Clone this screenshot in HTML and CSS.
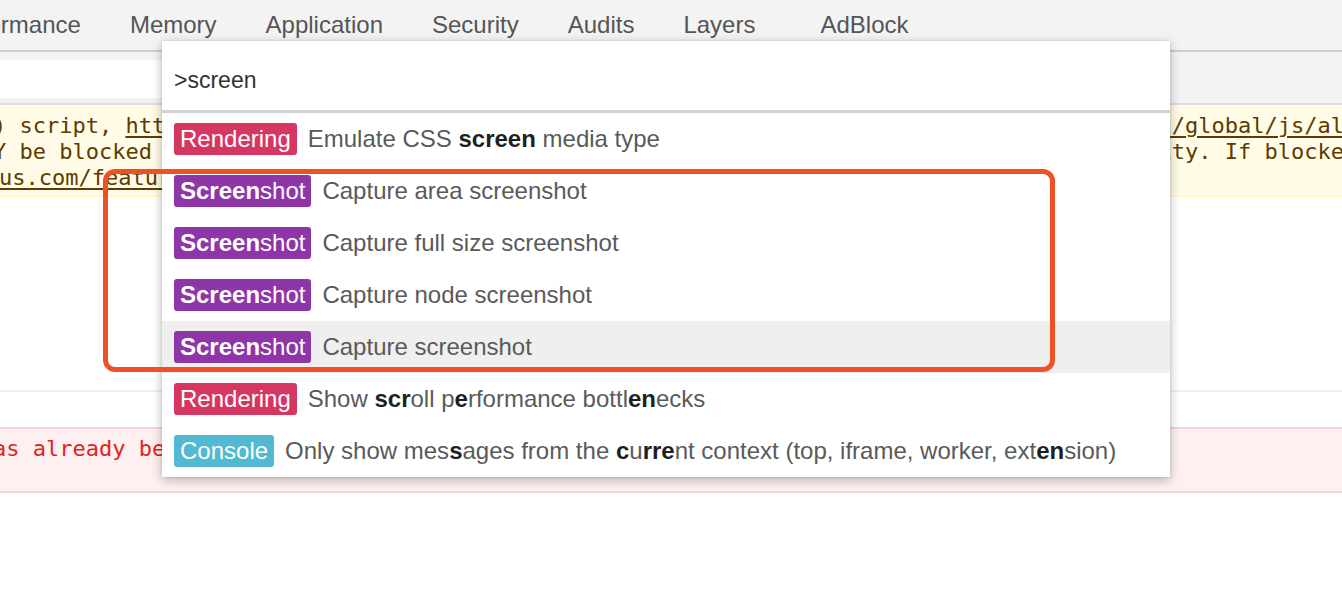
FILE: index.html
```html
<!DOCTYPE html>
<html lang="en">
<head>
<meta charset="utf-8">
<title>DevTools command menu</title>
<link rel="stylesheet" href="styles.css">
</head>
<body>
<div class="devtools">
  <nav class="tabbar">
    <span class="tab tab-first">Performance</span>
    <span class="tab">Memory</span>
    <span class="tab">Application</span>
    <span class="tab">Security</span>
    <span class="tab">Audits</span>
    <span class="tab">Layers</span>
    <span class="tab tab-ext">AdBlock</span>
  </nav>
  <div class="toolbar">
    <div class="filter"></div>
  </div>
  <div class="console">
    <div class="msg msg-warn">
      <div class="ln ln-1">) script, <u>https://static.example-ads-network.com/assets/bundles/third-party/lib/site/main/global/js/all.min.js</u>, is invoked via document.write.</div>
      <div class="ln ln-2">Y be blocked by a browser in this or in a future page load due to poor network connectivity. If blocked in this page load, it will be confirmed in a subsequent console message.</div>
      <div class="ln ln-3"><u>us.com/feature/5718547946799104</u> for more details.</div>
    </div>
    <div class="msg-blank"></div>
    <div class="msg msg-plain"></div>
    <div class="msg msg-error">
      <div class="ln ln-err">as already been declared</div>
      <div class="ln">&nbsp;</div>
    </div>
  </div>
</div>

<div class="palette">
  <div class="prompt">&gt;screen</div>
  <ul class="items">
    <li class="item"><span class="badge b-render">Rendering</span><span class="desc">Emulate CSS <b>screen</b> media type</span></li>
    <li class="item"><span class="badge b-shot"><b>Screen</b>shot</span><span class="desc">Capture area screenshot</span></li>
    <li class="item"><span class="badge b-shot"><b>Screen</b>shot</span><span class="desc">Capture full size screenshot</span></li>
    <li class="item"><span class="badge b-shot"><b>Screen</b>shot</span><span class="desc">Capture node screenshot</span></li>
    <li class="item item-sel"><span class="badge b-shot"><b>Screen</b>shot</span><span class="desc">Capture screenshot</span></li>
    <li class="item"><span class="badge b-render">Rendering</span><span class="desc">Show <b>scr</b>oll p<b>e</b>rformance bottl<b>en</b>ecks</span></li>
    <li class="item"><span class="badge b-console">Console</span><span class="desc">Only show mes<b>s</b>ages from the <b>c</b>u<b>rre</b>nt context (top, iframe, worker, ext<b>en</b>sion)</span></li>
  </ul>
</div>

<div class="annotation"></div>
</body>
</html>
```

FILE: styles.css
```css
html, body {
  margin: 0;
  padding: 0;
  background: #ffffff;
  overflow: hidden;
  width: 1342px;
  height: 602px;
}

body {
  font-family: "Liberation Sans", Arial, sans-serif;
  position: relative;
}

.devtools {
  display: flex;
  flex-direction: column;
  width: 1342px;
}

/* ---------- tab bar ---------- */
.tabbar {
  display: flex;
  align-items: center;
  height: 50px;
  background: #f3f3f3;
  border-bottom: 2px solid #cdcdcd;
  white-space: nowrap;
  overflow: hidden;
}

.tab {
  font-size: 24px;
  color: #555555;
  padding: 0 24.5px;
  line-height: 48px;
}

.tab-first {
  margin-left: -81px;
}

.tab-ext {
  margin-left: 16px;
}

/* ---------- toolbar ---------- */
.toolbar {
  background: #f3f3f3;
  border-bottom: 2px solid #dcdcdc;
  display: flex;
  align-items: flex-start;
  padding-top: 8px;
  box-sizing: border-box;
  height: 53px;
}

.filter {
  width: 620px;
  height: 38px;
  background: #ffffff;
}

/* ---------- console ---------- */
.console {
  font-family: "DejaVu Sans Mono", "Liberation Mono", monospace;
  font-size: 22px;
  line-height: 26px;
}

.msg {
  overflow: hidden;
}

.ln {
  white-space: pre;
}

.ln-1 {
  margin-left: -7px;
}

.ln-2 {
  margin-left: -7px;
}

.ln-3 {
  margin-left: -1px;
}

.ln-err {
  margin-left: -7px;
}

.msg-warn {
  background: #fffbe6;
  border-bottom: 1px solid #fff2c0;
  color: #5c3c00;
  padding: 8px 0 5px;
}

.msg-warn u {
  text-decoration-thickness: 2px;
  text-underline-offset: 3px;
}

.msg-blank {
  height: 193px;
  border-bottom: 2px solid #efefef;
}

.msg-plain {
  height: 35px;
}

.msg-error {
  background: #fef0f0;
  border-top: 2px solid #f8d4d4;
  border-bottom: 2px solid #f8d4d4;
  color: #e2231a;
  padding: 7px 0 3px;
}

/* ---------- command palette ---------- */
.palette {
  position: absolute;
  left: 162px;
  top: 41px;
  width: 1008px;
  background: #ffffff;
  box-shadow: 0 3px 10px rgba(0, 0, 0, 0.28), 0 0 2px rgba(0, 0, 0, 0.12);
}

.prompt {
  height: 69px;
  line-height: 78px;
  padding-left: 12px;
  font-size: 23px;
  color: #333333;
  border-bottom: 3px solid #d2d2d2;
}

.items {
  list-style: none;
  margin: 0;
  padding: 0;
}

.item {
  display: flex;
  align-items: center;
  height: 52px;
  padding-left: 12px;
  gap: 11px;
  font-size: 24px;
  white-space: nowrap;
}

.item-sel {
  background: #efefef;
}

.badge {
  display: inline-flex;
  align-items: center;
  height: 32px;
  padding: 0 6px;
  border-radius: 3px;
  color: #ffffff;
  font-size: 24px;
}

.badge b {
  font-weight: 700;
}

.b-render {
  background: #d63762;
}

.b-shot {
  background: #8e36a8;
}

.b-console {
  background: #52b9d2;
}

.desc {
  color: #5a5a5a;
}

.desc b {
  color: #1f1f1f;
  font-weight: 700;
}

/* ---------- annotation highlight ---------- */
.annotation {
  position: absolute;
  left: 103px;
  top: 169px;
  width: 942px;
  height: 193px;
  border: 5px solid #ef5127;
  border-radius: 12px;
}
```
